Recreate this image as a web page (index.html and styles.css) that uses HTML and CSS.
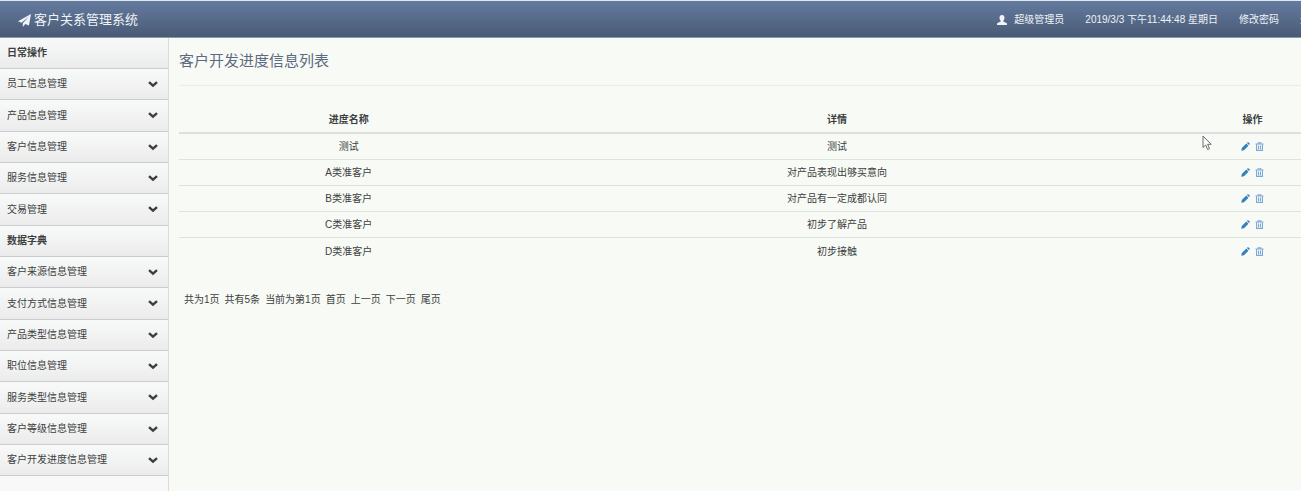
FILE: index.html
```html
<!DOCTYPE html>
<html lang="zh-CN">
<head>
<meta charset="utf-8">
<title>客户关系管理系统</title>
<link rel="stylesheet" href="styles.css">
</head>
<body>
<svg class="defs" aria-hidden="true">
  <symbol id="chevron" viewBox="0 0 10 7"><path d="M1 1.1 5 4.7 9 1.1" fill="none" stroke="currentColor" stroke-width="2.4"/></symbol>
  <symbol id="pencil" viewBox="0 0 10 10"><path d="M.3 9.7.9 6.7 5.9 1.7 8.3 4.1 3.3 9.1ZM6.6 1 7.4.4Q8 0 8.5.5L9.5 1.5Q10 2 9.6 2.6L9 3.4Z" fill="currentColor"/></symbol>
  <symbol id="trash" viewBox="0 0 10 10"><path d="M.6 2.3H9.4M3.5 2V.8H6.5V2M1.7 2.5V9.3H8.3V2.5M3.9 4V8M6.1 4V8" fill="none" stroke="currentColor" stroke-width="1.2"/></symbol>
</svg>
<div class="page">
  <header class="topbar">
    <a class="brand" href="#">
      <svg class="plane" viewBox="0 0 14 14"><path d="M14 0 11.8 12.5 7.8 10.8 5.2 14V9.9L11.7 2.8 3.8 9.3.1 7.8Z" fill="currentColor"/></svg>
      客户关系管理系统
    </a>
    <nav class="account">
      <a class="user" href="#">
        <svg class="person" viewBox="0 0 10 10"><path d="M5 0C6.7 0 7.5 1.1 7.5 2.8 7.5 4.2 7 5.1 6.3 5.8V6.6L9 7.7Q10 8.1 10 9V10H0V9Q0 8.1 1 7.7L3.7 6.6V5.8C3 5.1 2.5 4.2 2.5 2.8 2.5 1.1 3.3 0 5 0Z" fill="currentColor"/></svg>
        超级管理员
      </a>
      <span>2019/3/3 下午11:44:48 星期日</span>
      <a href="#">修改密码</a>
      <a href="#">退出</a>
    </nav>
  </header>
  <div class="body">
    <aside class="sidebar">
      <h2 class="group">日常操作</h2>
      <button class="item">员工信息管理<svg class="chevron"><use href="#chevron"/></svg></button>
      <button class="item">产品信息管理<svg class="chevron"><use href="#chevron"/></svg></button>
      <button class="item">客户信息管理<svg class="chevron"><use href="#chevron"/></svg></button>
      <button class="item">服务信息管理<svg class="chevron"><use href="#chevron"/></svg></button>
      <button class="item">交易管理<svg class="chevron"><use href="#chevron"/></svg></button>
      <h2 class="group">数据字典</h2>
      <button class="item">客户来源信息管理<svg class="chevron"><use href="#chevron"/></svg></button>
      <button class="item">支付方式信息管理<svg class="chevron"><use href="#chevron"/></svg></button>
      <button class="item">产品类型信息管理<svg class="chevron"><use href="#chevron"/></svg></button>
      <button class="item">职位信息管理<svg class="chevron"><use href="#chevron"/></svg></button>
      <button class="item">服务类型信息管理<svg class="chevron"><use href="#chevron"/></svg></button>
      <button class="item">客户等级信息管理<svg class="chevron"><use href="#chevron"/></svg></button>
      <button class="item">客户开发进度信息管理<svg class="chevron"><use href="#chevron"/></svg></button>
    </aside>
    <main class="content">
      <h1 class="title">客户开发进度信息列表</h1>
      <table class="list">
        <thead>
          <tr><th class="name">进度名称</th><th class="detail">详情</th><th>操作</th></tr>
        </thead>
        <tbody>
          <tr><td>测试</td><td>测试</td><td><div class="actions"><a href="#" aria-label="编辑"><svg><use href="#pencil"/></svg></a><a class="remove" href="#" aria-label="删除"><svg><use href="#trash"/></svg></a></div></td></tr>
          <tr><td>A类准客户</td><td>对产品表现出够买意向</td><td><div class="actions"><a href="#" aria-label="编辑"><svg><use href="#pencil"/></svg></a><a class="remove" href="#" aria-label="删除"><svg><use href="#trash"/></svg></a></div></td></tr>
          <tr><td>B类准客户</td><td>对产品有一定成都认同</td><td><div class="actions"><a href="#" aria-label="编辑"><svg><use href="#pencil"/></svg></a><a class="remove" href="#" aria-label="删除"><svg><use href="#trash"/></svg></a></div></td></tr>
          <tr><td>C类准客户</td><td>初步了解产品</td><td><div class="actions"><a href="#" aria-label="编辑"><svg><use href="#pencil"/></svg></a><a class="remove" href="#" aria-label="删除"><svg><use href="#trash"/></svg></a></div></td></tr>
          <tr><td>D类准客户</td><td>初步接触</td><td><div class="actions"><a href="#" aria-label="编辑"><svg><use href="#pencil"/></svg></a><a class="remove" href="#" aria-label="删除"><svg><use href="#trash"/></svg></a></div></td></tr>
        </tbody>
      </table>
      <div class="pager">
        <span>共为1页</span><span>共有5条</span><span>当前为第1页</span>
        <a href="#">首页</a><a href="#">上一页</a><a href="#">下一页</a><a href="#">尾页</a>
      </div>
    </main>
  </div>
</div>
<svg class="cursor" viewBox="0 0 10 16" aria-hidden="true"><path d="M1 1V12.5L3.7 10 5.6 14.5 7.5 13.7 5.6 9.3H9.2Z" fill="#fafbf9" stroke="#6c6f72"/></svg>
</body>
</html>
```
FILE: styles.css
```css
* { box-sizing: border-box; }

body {
  margin: 0;
  min-height: 100vh;
  overflow-x: hidden;
  background: #f8faf6;
  color: #3c3f3e;
  font: 10px/16px "Liberation Sans", "Noto Sans CJK SC", sans-serif;
}

a { color: inherit; text-decoration: none; }

.defs { position: absolute; width: 0; height: 0; }

/* The layout is slightly wider than the window, as its last column runs past the edge. */
.page {
  display: flex;
  flex-direction: column;
  width: calc(100% + 60px);
  min-height: 100vh;
}

.topbar {
  display: flex;
  align-items: center;
  justify-content: space-between;
  height: 38px;
  padding: 2px 41px 0 18px;
  border-top: 1px solid #dfe8ef;
  border-bottom: 1px solid #8b98a8;
  background: linear-gradient(#647b9f, #495a75);
  color: #f0f3f7;
}

.brand {
  display: flex;
  align-items: center;
  gap: 3px;
  font-size: 13px;
}

.plane { width: 13px; height: 13px; }

.account { display: flex; gap: 21px; }

.user { display: flex; align-items: center; gap: 7px; }

.person { width: 10px; height: 10px; }

.body { display: flex; flex: 1; }

.sidebar {
  flex: none;
  width: 169px;
  border-right: 1px solid #d9dbdc;
  background: #f7f8f7;
}

.group,
.item {
  display: flex;
  align-items: center;
  justify-content: space-between;
  width: 100%;
  margin: 0;
  padding: 0 10px 0 7px;
  border: 0;
  border-bottom: 1px solid #cbccd1;
  background: linear-gradient(#f8faf9, #ebebeb);
  color: #3c3f3e;
  font: inherit;
}

.group { height: 31px; font-weight: bold; }

.item { height: 31px; }

.item:nth-child(3n) { height: 32px; }

.chevron { width: 10px; height: 7px; }

.content { flex: 1; padding: 0 12px 0 10px; }

.title {
  margin: 0;
  padding: 11px 0 13px;
  border-bottom: 1px solid #ebedea;
  color: #5c6a80;
  font-size: 15px;
  font-weight: normal;
  line-height: 23px;
}

.list {
  width: 100%;
  margin-top: 20px;
  border-collapse: separate;
  border-spacing: 0;
  table-layout: fixed;
  text-align: center;
}

.list th { padding: 6px 0 4px; border-bottom: 2px solid #dcdfdc; }

.list td { height: 26px; padding: 0; border-bottom: 1px solid #dfe2df; }

.list tr:last-child td { height: 27px; border-bottom: 0; }

.name { width: 29%; }

.detail { width: 54.5%; }

.actions { display: flex; justify-content: center; gap: 5px; color: #3480c2; }

.actions a { display: flex; }

.actions svg { width: 9px; height: 9px; }

.remove { color: #7da9d6; }

.pager { display: flex; gap: 5px; padding: 27px 5px; }

.cursor { position: absolute; top: 135px; left: 1202px; width: 10px; height: 16px; }
```
